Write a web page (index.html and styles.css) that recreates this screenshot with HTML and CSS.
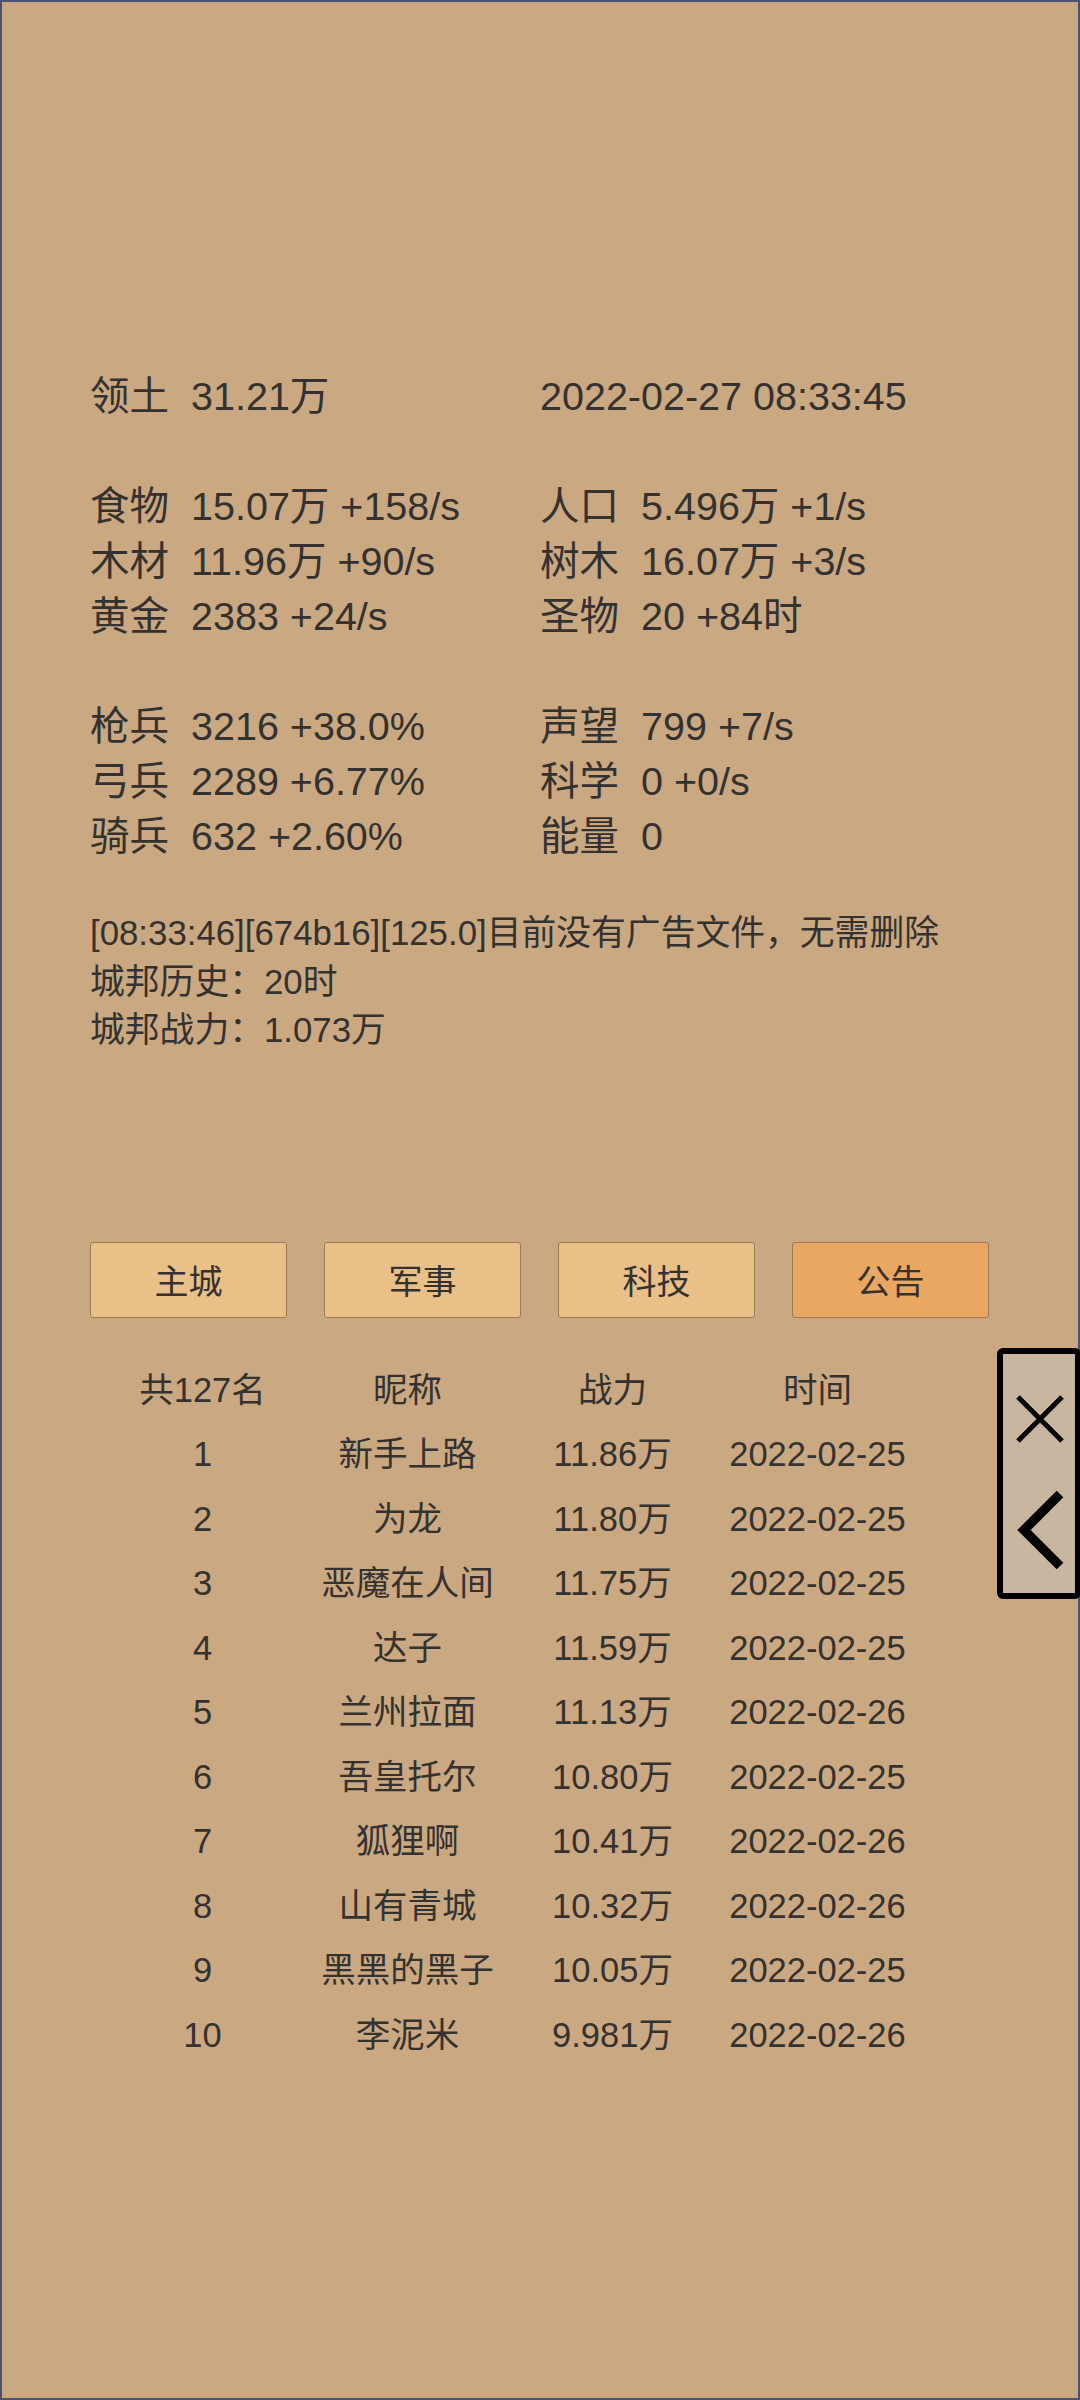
FILE: index.html
```html
<!DOCTYPE html>
<html lang="zh-CN">
<head>
<meta charset="utf-8">
<title>城邦</title>
<link rel="stylesheet" href="styles.css">
</head>
<body>
<div class="page">
  <section class="stats">
    <div class="row"><span class="lbl">领土</span><span>31.21万</span></div>
    <div class="row"><span>2022-02-27 08:33:45</span></div>
    <div class="row empty"></div><div class="row empty"></div>
    <div class="row"><span class="lbl">食物</span><span>15.07万 +158/s</span></div>
    <div class="row"><span class="lbl">人口</span><span>5.496万 +1/s</span></div>
    <div class="row"><span class="lbl">木材</span><span>11.96万 +90/s</span></div>
    <div class="row"><span class="lbl">树木</span><span>16.07万 +3/s</span></div>
    <div class="row"><span class="lbl">黄金</span><span>2383 +24/s</span></div>
    <div class="row"><span class="lbl">圣物</span><span>20 +84时</span></div>
    <div class="row empty"></div><div class="row empty"></div>
    <div class="row"><span class="lbl">枪兵</span><span>3216 +38.0%</span></div>
    <div class="row"><span class="lbl">声望</span><span>799 +7/s</span></div>
    <div class="row"><span class="lbl">弓兵</span><span>2289 +6.77%</span></div>
    <div class="row"><span class="lbl">科学</span><span>0 +0/s</span></div>
    <div class="row"><span class="lbl">骑兵</span><span>632 +2.60%</span></div>
    <div class="row"><span class="lbl">能量</span><span>0</span></div>
  </section>

  <section class="log">
    <div>[08:33:46][674b16][125.0]目前没有广告文件，无需删除</div>
    <div>城邦历史：20时</div>
    <div>城邦战力：1.073万</div>
  </section>

  <nav class="tabs">
    <div class="tab">主城</div>
    <div class="tab">军事</div>
    <div class="tab">科技</div>
    <div class="tab active">公告</div>
  </nav>

  <section class="rank">
    <div class="cell">共127名</div><div class="cell">昵称</div><div class="cell">战力</div><div class="cell">时间</div>
    <div class="cell">1</div><div class="cell">新手上路</div><div class="cell">11.86万</div><div class="cell">2022-02-25</div>
    <div class="cell">2</div><div class="cell">为龙</div><div class="cell">11.80万</div><div class="cell">2022-02-25</div>
    <div class="cell">3</div><div class="cell">恶魔在人间</div><div class="cell">11.75万</div><div class="cell">2022-02-25</div>
    <div class="cell">4</div><div class="cell">达子</div><div class="cell">11.59万</div><div class="cell">2022-02-25</div>
    <div class="cell">5</div><div class="cell">兰州拉面</div><div class="cell">11.13万</div><div class="cell">2022-02-26</div>
    <div class="cell">6</div><div class="cell">吾皇托尔</div><div class="cell">10.80万</div><div class="cell">2022-02-25</div>
    <div class="cell">7</div><div class="cell">狐狸啊</div><div class="cell">10.41万</div><div class="cell">2022-02-26</div>
    <div class="cell">8</div><div class="cell">山有青城</div><div class="cell">10.32万</div><div class="cell">2022-02-26</div>
    <div class="cell">9</div><div class="cell">黑黑的黑子</div><div class="cell">10.05万</div><div class="cell">2022-02-25</div>
    <div class="cell">10</div><div class="cell">李泥米</div><div class="cell">9.981万</div><div class="cell">2022-02-26</div>
  </section>

  <div class="side">
    <svg class="side-icons" viewBox="0 0 72 239" width="72" height="239">
      <path d="M15 43 L59 87 M59 43 L15 87" stroke="#000" stroke-width="5" fill="none"/>
      <path d="M57 140 L21 176 L57 212" stroke="#000" stroke-width="9.5" fill="none" stroke-linejoin="miter" stroke-linecap="butt"/>
    </svg>
  </div>
</div>
</body>
</html>
```
FILE: styles.css
```css
html, body {
  margin: 0;
  padding: 0;
}
body {
  width: 1080px;
  height: 2400px;
  font-family: "Liberation Sans", "Noto Sans CJK SC", sans-serif;
  color: #343230;
}
.page {
  position: relative;
  box-sizing: border-box;
  width: 1080px;
  height: 2400px;
  border: 2px solid #4a5274;
  background: #caa982;
  padding: 367px 0 0 88px;
}
.stats {
  display: grid;
  grid-template-columns: 450px 450px;
  font-size: 39.5px;
  line-height: 55px;
}
.row {
  display: flex;
  height: 55px;
  white-space: nowrap;
}
.lbl {
  width: 101px;
  flex: none;
}
.log {
  margin-top: 45px;
  font-size: 34.8px;
  line-height: 48.5px;
  white-space: nowrap;
}
.tabs {
  display: flex;
  gap: 37px;
  margin-top: 187px;
}
.tab {
  box-sizing: border-box;
  width: 197px;
  height: 76px;
  border: 1.5px solid #9b7a55;
  border-radius: 3px;
  background: #e9c087;
  font-size: 34px;
  display: flex;
  align-items: center;
  justify-content: center;
}
.tab.active {
  background: #e9a762;
}
.rank {
  display: grid;
  grid-template-columns: repeat(4, 205px);
  grid-auto-rows: 64.5px;
  margin-top: 40px;
  margin-left: 10px;
  font-size: 34.5px;
  line-height: 64.5px;
}
.cell {
  text-align: center;
  white-space: nowrap;
}
.side {
  position: absolute;
  left: 995px;
  top: 1346px;
  box-sizing: border-box;
  width: 84px;
  height: 251px;
  border: 6px solid #000;
  border-radius: 6px;
  background: #c9b6a0;
}
.side-icons {
  display: block;
  width: 72px;
  height: 239px;
}
```
